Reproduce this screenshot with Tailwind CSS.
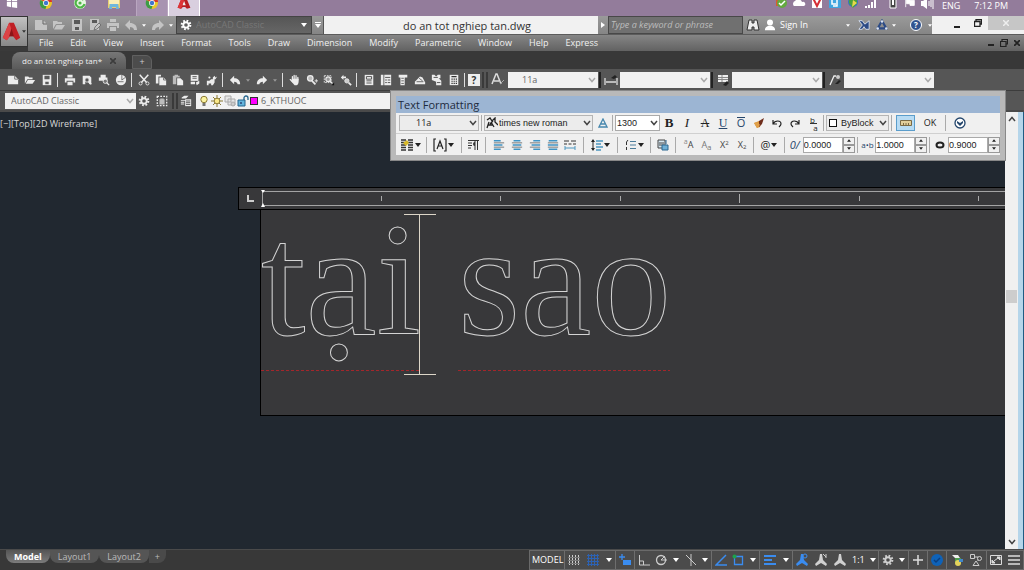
<!DOCTYPE html>
<html lang="en">
<head>
    <meta charset="UTF-8">
    <meta name="viewport" content="width=device-width, initial-scale=1.0">
    <script src="https://cdn.jsdelivr.net/npm/@tailwindcss/browser@4"></script>
    <title>do an tot nghiep tan.dwg</title>
    <style>
        body {
            font-family: 'Open Sans', 'Noto Sans', sans-serif;
        }
        svg {
            flex-shrink: 0;
        }
        .outline-text {
            font-family: 'Liberation Serif', serif;
            color: transparent;
            -webkit-text-stroke: 1px #d4d4d4;
        }
    </style>
</head>
<body class="h-screen flex flex-col overflow-hidden bg-[#212830] text-[9px] leading-3">

    <!-- Icon set -->
    <svg class="hidden">
        <symbol id="caret" viewBox="0 0 6 4"><path d="M0 0h6L3 4z" fill="currentColor"/></symbol>
        <symbol id="chev" viewBox="0 0 8 6"><path d="M1 1l3 3.5L7 1" fill="none" stroke="currentColor" stroke-width="1.5"/></symbol>
        <symbol id="new" viewBox="0 0 14 14"><path d="M1 2h8l4 4v6H1z" fill="currentColor"/><path d="M9 2v4h4" fill="none" stroke="#666"/></symbol>
        <symbol id="open" viewBox="0 0 14 14"><path d="M1 3h4l1 1h4v2H4l-3 5z" fill="currentColor"/><path d="M4.500 7H13l-3 4.500H2z" fill="currentColor"/></symbol>
        <symbol id="save" viewBox="0 0 14 14"><path d="M2 1h10v12H2z" fill="currentColor"/><path d="M4 2h6v4H4zM5 9h4v3H5z" fill="#5a5a5a"/></symbol>
        <symbol id="saveas" viewBox="0 0 14 14"><path d="M2 1h9v11H2z" fill="currentColor"/><path d="M4 2h5v3H4z" fill="#5a5a5a"/><path d="M6 12l1-3 4-4 2 2-4 4z" fill="currentColor" stroke="#5a5a5a" stroke-width=".7"/></symbol>
        <symbol id="print" viewBox="0 0 14 14"><path d="M4 1h6v3H4zM1 5h12v5h-2V8H3v2H1zM4 9h6v4H4z" fill="currentColor"/></symbol>
        <symbol id="preview" viewBox="0 0 14 14"><path d="M2 2h8l2 2v8h-2L8 9V6H5v6H2z" fill="currentColor"/><circle cx="7" cy="7" r="2.500" fill="#555" stroke="currentColor"/><path d="M9 9l3 3" stroke="currentColor" stroke-width="1.500"/></symbol>
        <symbol id="plot" viewBox="0 0 14 14"><path d="M3 1h6v3H3zM1 4h10v4H1z" fill="currentColor"/><circle cx="8.500" cy="8.500" r="2.500" fill="#777" stroke="currentColor"/><path d="M10 10l3 3" stroke="currentColor" stroke-width="1.500"/></symbol>
        <symbol id="globe" viewBox="0 0 14 14"><circle cx="7" cy="7" r="6" fill="currentColor"/><path d="M8 1v6l4-3M3 9h7" stroke="#666" fill="none"/></symbol>
        <symbol id="cut" viewBox="0 0 14 14"><path d="M2 1l8 9M12 1L4 10" stroke="currentColor" stroke-width="1.800"/><circle cx="3" cy="11" r="1.800" fill="none" stroke="currentColor"/><circle cx="11" cy="11" r="1.800" fill="none" stroke="currentColor"/></symbol>
        <symbol id="copy" viewBox="0 0 14 14"><path d="M1 1h6v2H4v8H1z" fill="currentColor"/><path d="M5 4h5l3 3v6H5z" fill="currentColor"/><path d="M10 4v3h3" stroke="#666" fill="none"/></symbol>
        <symbol id="paste" viewBox="0 0 14 14"><path d="M1 2h2V1h4v1h2v2H5v8H1z" fill="#bbb"/><path d="M6 5h4l3 3v5H6z" fill="currentColor"/></symbol>
        <symbol id="match" viewBox="0 0 14 14"><path d="M2 1h9v7H2z" fill="currentColor"/><path d="M4 3h5M4 5h5" stroke="#555"/><path d="M2 9h5v3H2zM8 10l4-2v3l-3 2z" fill="currentColor"/></symbol>
        <symbol id="block" viewBox="0 0 14 14"><path d="M1 8h3l2-2h4v4l-2 3H6v-2H3v2H1zM8 4l2-2 1 2 2-1-2 3H8z" fill="currentColor"/><circle cx="4" cy="4" r="1.200" fill="currentColor"/></symbol>
        <symbol id="undo" viewBox="0 0 14 14"><path d="M6 2v3c4 0 7 2 7 7h-3c0-2-2-3-4-3v3L1 7z" fill="currentColor"/></symbol>
        <symbol id="redo" viewBox="0 0 14 14"><path d="M8 2v3C4 5 1 7 1 12h3c0-2 2-3 4-3v3l5-5z" fill="currentColor"/></symbol>
        <symbol id="hand" viewBox="0 0 14 14"><path d="M4 6V3M6 6V1.500M8.200 6V2M10.300 7V4M4 9L1.500 6.500" stroke="currentColor" stroke-width="1.500" stroke-linecap="round"/><path d="M3.200 5.500h8V9c0 2-1 4-2.500 4H6.500L3 9z" fill="currentColor"/></symbol>
        <symbol id="zoom" viewBox="0 0 14 14"><circle cx="5" cy="5" r="3.200" fill="#bbb" stroke="currentColor" stroke-width="1.500"/><path d="M7 8l4 4" stroke="currentColor" stroke-width="2"/><path d="M10 8h4M12 6v4" stroke="currentColor"/></symbol>
        <symbol id="zoomw" viewBox="0 0 14 14"><path d="M1.500 2h8v8h-8z" fill="none" stroke="currentColor" stroke-dasharray="2 1"/><circle cx="6" cy="6" r="2.700" fill="#999" stroke="currentColor" stroke-width="1.300"/><path d="M8 8l3 3" stroke="currentColor" stroke-width="1.500"/><path d="M13 10v3h-3z" fill="#111"/></symbol>
        <symbol id="zoomp" viewBox="0 0 14 14"><path d="M1 4l3-3v2h3v2H4v2z" fill="currentColor"/><circle cx="8" cy="8" r="2.500" fill="#ccc" stroke="currentColor"/><path d="M10 10l3 3" stroke="currentColor" stroke-width="2"/></symbol>
        <symbol id="props" viewBox="0 0 14 14"><path d="M2 1h10v12H2z" fill="currentColor"/><path d="M4 3h6v3H4zM4 8h6M4 10.500h6" fill="none" stroke="#444"/></symbol>
        <symbol id="design" viewBox="0 0 14 14"><path d="M1 1h3v12H1zM5 1h8v12H5z" fill="currentColor"/><path d="M6 4h6M6 7h2M9 7h3M6 10h2M9 10h3" stroke="#444"/></symbol>
        <symbol id="tool" viewBox="0 0 14 14"><path d="M2 1h10v3H9v9H4V4H2z" fill="currentColor"/><path d="M5 5h3M5 8h3M5 11h3" stroke="#555"/></symbol>
        <symbol id="sheet" viewBox="0 0 14 14"><path d="M1 9l6-6 3 1 3 6v2H1z" fill="currentColor"/><path d="M3 9h8M6 5l4 3" stroke="#555"/></symbol>
        <symbol id="markup" viewBox="0 0 14 14"><path d="M1 1h3l2 2 2-2h3v4H9l3 3v5H6V9L1 7z" fill="currentColor"/><path d="M3 4h5M7 10h4" stroke="#444"/></symbol>
        <symbol id="calc" viewBox="0 0 14 14"><path d="M2 1h10v12H2z" fill="currentColor"/><path d="M4 3h6M4 6h1.500M6.500 6H8M9 6h1.500M4 8.500h1.500M6.500 8.500H8M9 8.500h1.500M4 11h1.500M6.500 11H8M9 11h1.500" stroke="#333" stroke-width="1.300"/></symbol>
        <symbol id="gear" viewBox="0 0 14 14"><circle cx="7" cy="7" r="5" fill="none" stroke="currentColor" stroke-width="2.500" stroke-dasharray="2 1.930"/><circle cx="7" cy="7" r="3.200" fill="none" stroke="currentColor" stroke-width="2.200"/></symbol>
        <symbol id="wssave" viewBox="0 0 14 14"><path d="M1.500 1.500h11v11h-11z" fill="none" stroke="currentColor" stroke-dasharray="2 1.500" stroke-width="1.500"/><path d="M4 5h1V4h4v1h1v6H4z" fill="#bbb"/></symbol>
        <symbol id="layers" viewBox="0 0 14 14"><path d="M2 3l3-2h5L7 4H2zM1 6h6v1H1zM1 8h4v1H1zM1 10h4v1H1z" fill="currentColor"/><path d="M6 5h7v8H6z" fill="currentColor"/><path d="M7 7h5M7 9h5M7 11h5" stroke="#444"/></symbol>
        <symbol id="win" viewBox="0 0 14 14"><path d="M1 1l5-1v6H1zM7 0l6-1v7H7zM1 7h5v6L1 12zM7 7h6v7L7 13z" fill="#fff"/></symbol>
        <symbol id="chrome" viewBox="0 0 14 14"><circle cx="7" cy="7" r="6" fill="#e8c62b"/><path d="M1.500 4A6 6 0 0 1 13 6H7z" fill="#d7362b"/><path d="M1.500 4A6 6 0 0 0 6.500 13L8 8z" fill="#3d9c45"/><circle cx="7" cy="7" r="2.900" fill="#fff"/><circle cx="7" cy="7" r="2.200" fill="#3f76cf"/></symbol>
        <symbol id="coccoc" viewBox="0 0 14 14"><circle cx="7" cy="7" r="6" fill="#e6f7e0"/><path d="M10.500 4A4.500 4.500 0 1 0 11.500 8" fill="none" stroke="#4fb648" stroke-width="2.200"/><circle cx="7" cy="7" r="1.600" fill="#4fb648"/></symbol>
        <symbol id="folder" viewBox="0 0 14 14"><path d="M1 1h5l1 1h6v10H1z" fill="#e6cf72"/><path d="M2 4h10v4H2z" fill="#f7eeb8"/><path d="M3 8h8l1 5H9v-2H5v2H2z" fill="#6db7dd"/></symbol>
        <symbol id="acad" viewBox="0 0 24 24"><path d="M9 1h6l8 19-6 2-3-3h-4l-3 3-6-2z" fill="#b81e22"/><path d="M12 8l3 8H9z" fill="#eee"/><path d="M9 1l3 7-5 14-6-2z" fill="#de3438"/></symbol>
        <symbol id="alogo" viewBox="0 0 24 24"><path d="M9 1h6l8 19-5 3-4-5h-4l-4 5-5-3z" fill="#c01f24"/><path d="M9 1l3 8-2 9-4 5-5-3z" fill="#dc4346"/><path d="M12 8l3 10h-6z" fill="#8d1418"/></symbol>
        <symbol id="al-left" viewBox="0 0 14 14"><path d="M1 4.500h12M1 9.500h12" stroke="#666"/><path d="M1 2h8M1 7h10M1 12h8" stroke="#3f93c4" stroke-width="1.800"/></symbol>
        <symbol id="al-mid" viewBox="0 0 14 14"><path d="M1 4.500h12M1 9.500h12" stroke="#666"/><path d="M3 2h8M2 7h10M3 12h8" stroke="#3f93c4" stroke-width="1.800"/></symbol>
        <symbol id="al-right" viewBox="0 0 14 14"><path d="M1 4.500h12M1 9.500h12" stroke="#666"/><path d="M5 2h8M3 7h10M5 12h8" stroke="#3f93c4" stroke-width="1.800"/></symbol>
        <symbol id="al-just" viewBox="0 0 14 14"><path d="M1 4.500h12M1 9.500h12" stroke="#666"/><path d="M2 2h10M1 7h12M2 12h10" stroke="#3f93c4" stroke-width="1.800"/></symbol>
        <symbol id="man" viewBox="0 0 14 14"><path d="M6 1h2l1 6 4 4-1 2-5-3-5 3-1-2 4-4z" fill="currentColor"/></symbol>
    </svg>

    <!-- Windows taskbar -->
    <div class="h-4 shrink-0 flex items-start bg-[#937c9b] text-white">
        <div class="flex grow">
            <div class="w-6 flex justify-center"><svg class="size-3 -mt-1"><use href="#win"/></svg></div>
            <div class="w-11 flex justify-center"><svg class="size-3.5 -mt-1"><use href="#chrome"/></svg></div>
            <div class="w-6 flex justify-center"><svg class="size-3.5 -mt-1"><use href="#coccoc"/></svg></div>
            <div class="w-11 flex justify-center"><svg class="size-3.5 -mt-1"><use href="#folder"/></svg></div>
            <div class="w-8 h-4 flex justify-center bg-[#a893b1] border-x border-[#b9a6c0]"><svg class="size-3.5 -mt-1"><use href="#chrome"/></svg></div>
            <div class="w-8 h-4 flex justify-center bg-[#d9cfdf] border-x border-white"><svg class="size-3.5 -mt-1"><use href="#acad"/></svg></div>
        </div>
        <div class="flex gap-1 pr-4 items-start">
            <svg class="size-3.5 -mt-1" viewBox="0 0 14 14"><path d="M2 1h8v9H2z" fill="#d95932"/><circle cx="8" cy="7" r="5" fill="#63a93e"/><path d="M5 7l2 2 4-4" stroke="#fff" stroke-width="1.5" fill="none"/></svg>
            <svg class="size-3.5 -mt-1" viewBox="0 0 14 14"><path d="M2 10a3 3 0 0 1 1-5 4 4 0 0 1 7 1 2 2 0 0 1 2 4z" fill="#fff"/></svg>
            <svg class="size-3.5 -mt-1" viewBox="0 0 14 14"><path d="M2 0h10v12H2z" fill="#fff"/><path d="M3 2l4 8 4-8" stroke="#d62d35" stroke-width="2" fill="none"/></svg>
            <svg class="size-3.5 -mt-1" viewBox="0 0 14 14"><path d="M1 0h12v12H1z" fill="#3fa5df"/><path d="M4 2v6h4M9 3v7H5" stroke="#fff" stroke-width="1.5" fill="none"/></svg>
            <svg class="size-3.5 -mt-1" viewBox="0 0 14 14"><circle cx="7" cy="6" r="5" fill="#3277bd"/><path d="M3 2h8v5L7 12 3 7z" fill="#4aa13c"/><path d="M7 4l4 3-5 4z" fill="#e6d84c"/></svg>
            <svg class="size-3.5 -mt-1" viewBox="0 0 14 14"><path d="M2 12v-2M5 12V9M8 12V6M11 12V2" stroke="#fff" stroke-width="2"/></svg>
            <svg class="size-3.5 -mt-1 ml-1" viewBox="0 0 14 14"><path d="M4 1h6v11H4z" fill="#444" stroke="#fff"/><path d="M6 4h2v5H6z" fill="#fff"/></svg>
            <svg class="size-3 -mt-1" viewBox="0 0 14 14"><path d="M2 0v13M3 3h4v2h5v6H7V9H3z" stroke="#fff" fill="#fff"/></svg>
            <svg class="size-3.5 -mt-1" viewBox="0 0 14 14"><path d="M1 5h2l4-3v11L3 10H1z" fill="#fff"/><path d="M9 5v5M11 4v7M13 2v11" stroke="#fff"/></svg>
            <span class="ml-1">ENG</span>
            <span class="ml-2.5">7:12 PM</span>
        </div>
    </div>

    <!-- Title bar and menu -->
    <header class="flex shrink-0 bg-[#3a3a3a]">
        <button class="w-7 h-[31px] shrink-0 flex items-center justify-center gap-px bg-linear-to-b from-[#c2c2c2] to-[#888] border border-[#333] text-[#333]" aria-label="Application menu">
            <svg class="size-[19px]"><use href="#alogo"/></svg>
            <svg class="w-1 h-[3px]"><use href="#caret"/></svg>
        </button>
        <div class="grow">
            <div class="h-[18px] flex items-stretch bg-linear-to-b from-[#9a9a9a] to-[#858585]">
                <div class="w-[148px] shrink-0 pl-1.5 flex items-center gap-1 text-[#c4c4c4]">
                    <svg class="size-3.5"><use href="#new"/></svg>
                    <svg class="size-3.5"><use href="#open"/></svg>
                    <svg class="size-3.5"><use href="#save"/></svg>
                    <svg class="size-3.5"><use href="#saveas"/></svg>
                    <svg class="size-3.5"><use href="#print"/></svg>
                    <svg class="size-3.5"><use href="#undo"/></svg>
                    <svg class="w-1 h-[3px] text-white"><use href="#caret"/></svg>
                    <svg class="size-3.5 ml-px"><use href="#redo"/></svg>
                    <svg class="w-1 h-[3px] text-white"><use href="#caret"/></svg>
                </div>
                <div class="relative w-[136px] shrink-0 flex items-center bg-linear-to-b from-[#565656] to-[#666] border border-[#444] text-white">
                    <svg class="size-3 ml-[3px]"><use href="#gear"/></svg>
                    <select aria-label="Workspace" class="appearance-none grow pl-1 text-[#777]"><option>AutoCAD Classic</option></select>
                    <svg class="w-1.5 h-1 absolute right-1"><use href="#caret"/></svg>
                </div>
                <button class="w-3 shrink-0 flex flex-col items-center justify-center gap-px text-white border-r border-[#555]" aria-label="Customize"><span class="w-1.5 h-px bg-white"></span><svg class="w-1.5 h-1"><use href="#caret"/></svg></button>
                <div class="grow bg-[#f1f1f1] text-[#333] text-[11px] leading-4 pt-0.5 text-center pl-3">do an tot nghiep tan.dwg</div>
                <button class="w-2.5 shrink-0 flex items-center justify-center text-white" aria-label="Collapse"><svg class="w-1 h-1.5" viewBox="0 0 4 6"><path d="M0 0v6l4-3z" fill="currentColor"/></svg></button>
                <input type="text" aria-label="Search" placeholder="Type a keyword or phrase" class="w-[135px] shrink-0 bg-[#707070] border border-[#484848] pl-0.5 italic placeholder:text-[#bdbdbd]">
                <div class="w-[189px] shrink-0 flex items-center text-white pl-[3px]">
                    <svg class="size-3.5" viewBox="0 0 14 14"><path d="M3 2h3v3h2V2h3l2 10H8V9H6v3H1z" fill="#eee" stroke="#333"/></svg>
                    <svg class="size-3 ml-1" viewBox="0 0 14 14"><circle cx="7" cy="4" r="3.500" fill="#fff"/><path d="M1 13c0-3 2-4 4-5h4c2 1 4 2 4 5z" fill="#fff"/></svg>
                    <a href="#" class="ml-1 w-[66px]">Sign In</a>
                    <svg class="w-1 h-[3px]"><use href="#caret"/></svg>
                    <svg class="size-3 ml-2" viewBox="0 0 14 14"><path d="M1 2h4l3 4 5-4v10H9L7 9l-2 3H1l4-5z" fill="#2c4b86" stroke="#dce4f2"/></svg>
                    <svg class="size-3 ml-1.5" viewBox="0 0 14 14"><path d="M7 2l5 9H2z" fill="none" stroke="#2c4b86" stroke-width="2.500"/><circle cx="7" cy="3" r="1.500" fill="#dce4f2"/><circle cx="2" cy="11" r="1.500" fill="#dce4f2"/><circle cx="12" cy="11" r="1.500" fill="#dce4f2"/></svg>
                    <svg class="w-1 h-[3px] ml-1"><use href="#caret"/></svg>
                    <span class="size-3 ml-3.5 rounded-full bg-[#31548f] border border-white font-bold text-[8px] leading-[10px] text-center">?</span>
                    <svg class="w-1 h-[3px] ml-1.5"><use href="#caret"/></svg>
                </div>
                <div class="w-[92px] shrink-0 flex bg-[#f1f1f1] text-[#222]">
                    <button class="w-9 pl-[22px]" aria-label="Minimize"><span class="block w-1.5 h-0.5 mt-1 bg-[#222]"></span></button>
                    <button class="w-5 h-3.5 flex items-center justify-center" aria-label="Restore"><svg class="size-2" viewBox="0 0 8 8"><path d="M2 2V.5h5.500V5H6M.5 2.500H6v5H.5z" fill="none" stroke="currentColor" stroke-width="1.300"/></svg></button>
                    <button class="grow h-3.5 bg-[#c6c6c6] flex items-center justify-center text-[#eee]" aria-label="Close"><svg class="size-1.5" viewBox="0 0 6 6"><path d="M0 0l6 6M6 0L0 6" stroke="currentColor" stroke-width="1.500"/></svg></button>
                </div>
            </div>
            <nav class="h-[17px] flex items-center bg-linear-to-b from-[#868686] to-[#626262] text-[#f0f0f0] border-t border-[#5c5c5c] pl-[11px] pr-1">
                <ul class="flex gap-[17px] grow">
                    <li>File</li><li>Edit</li><li>View</li><li>Insert</li><li>Format</li><li>Tools</li><li>Draw</li><li>Dimension</li><li>Modify</li><li>Parametric</li><li>Window</li><li>Help</li><li>Express</li>
                </ul>
                <div class="flex items-center gap-1.5 text-[#222]">
                    <span class="w-1.5 h-0.5 mt-1 bg-[#222]"></span>
                    <svg class="size-2" viewBox="0 0 8 8"><path d="M2 2V.5h5.500V5H6M.5 2.500H6v5H.5z" fill="none" stroke="currentColor" stroke-width="1.200"/></svg>
                    <svg class="size-1.5" viewBox="0 0 6 6"><path d="M0 0l6 6M6 0L0 6" stroke="currentColor" stroke-width="1.700"/></svg>
                </div>
            </nav>
        </div>
    </header>

    <!-- File tabs -->
    <div class="h-[19px] shrink-0 flex items-end bg-[#383838] pl-3 border-b border-[#555]">
        <div class="h-[17px] flex items-center bg-linear-to-b from-[#777] to-[#5a5a5a] text-[#eee] rounded-t-lg px-2.5 gap-2 text-[8px]">do an tot nghiep tan*
            <svg class="size-1.5 text-[#3c3c3c]" viewBox="0 0 6 6"><path d="M0 0l6 6M6 0L0 6" stroke="currentColor" stroke-width="1.600"/></svg>
        </div>
        <button class="w-5 h-3.5 ml-1.5 bg-[#4c4c4c] border border-[#606060] rounded-tr-md text-[#ccc] text-[9px] leading-3">+</button>
    </div>

    <!-- Standard toolbar -->
    <div class="h-5 shrink-0 flex items-center bg-[#565656] text-[#ececec] pl-1">
        <div class="flex w-[51px] justify-around"><svg class="size-3"><use href="#new"/></svg><svg class="size-3"><use href="#open"/></svg><svg class="size-3"><use href="#save"/></svg></div>
        <i class="w-px h-3.5 ml-[2px] mr-[3px] bg-[#ddd]"></i>
        <div class="flex w-[68px] justify-around"><svg class="size-3"><use href="#print"/></svg><svg class="size-3"><use href="#preview"/></svg><svg class="size-3"><use href="#plot"/></svg><svg class="size-3"><use href="#globe"/></svg></div>
        <i class="w-px h-3.5 ml-[2px] mr-[3px] bg-[#ddd]"></i>
        <div class="flex w-[85px] justify-around"><svg class="size-3"><use href="#cut"/></svg><svg class="size-3"><use href="#copy"/></svg><svg class="size-3"><use href="#paste"/></svg><svg class="size-3"><use href="#match"/></svg><svg class="size-3"><use href="#block"/></svg></div>
        <i class="w-px h-3.5 ml-[2px] mr-[3px] bg-[#ddd]"></i>
        <div class="flex w-[54px] justify-around items-center"><svg class="size-3"><use href="#undo"/></svg><svg class="w-1 h-[3px] text-[#999]"><use href="#caret"/></svg><svg class="size-3"><use href="#redo"/></svg><svg class="w-1 h-[3px] text-[#999]"><use href="#caret"/></svg></div>
        <i class="w-px h-3.5 ml-[2px] mr-[3px] bg-[#ddd]"></i>
        <div class="flex w-[68px] justify-around"><svg class="size-3"><use href="#hand"/></svg><svg class="size-3"><use href="#zoom"/></svg><svg class="size-3"><use href="#zoomw"/></svg><svg class="size-3"><use href="#zoomp"/></svg></div>
        <i class="w-px h-3.5 ml-[2px] mr-[3px] bg-[#ddd]"></i>
        <div class="flex w-[102px] justify-around"><svg class="size-3"><use href="#props"/></svg><svg class="size-3"><use href="#design"/></svg><svg class="size-3"><use href="#tool"/></svg><svg class="size-3"><use href="#sheet"/></svg><svg class="size-3"><use href="#markup"/></svg><svg class="size-3"><use href="#calc"/></svg></div>
        <i class="w-px h-3.5 ml-[2px] mr-[3px] bg-[#ddd]"></i>
        <span class="w-3 h-3 bg-[#eee] text-[#333] text-[10px] font-bold text-center">?</span>
        <i class="w-1.5 h-4 ml-0.5 border-x-2 border-[#3a3a3a]"></i>
        <div class="w-5 flex justify-center"><svg class="size-3.5" viewBox="0 0 14 14"><path d="M1 11L5 1h1l4 10M3 8h5" stroke="#ddd" stroke-width="1.500" fill="none"/><path d="M9 11l4-4" stroke="#aaa"/></svg></div>

        <div class="relative w-[90px] flex items-center">
            <select aria-label="Text style" class="appearance-none w-full h-4 pl-3.5 bg-[#f2f2f2] text-[#666]"><option>11a</option></select>
            <svg class="w-2 h-1.5 absolute right-0.5 text-[#aaa]"><use href="#chev"/></svg>
        </div>
        <i class="w-0.5 h-4 ml-px bg-[#222]"></i>
        <div class="w-[19px] flex justify-center"><svg class="size-3.5" viewBox="0 0 14 14"><path d="M1 5v7M13 5v7M2 9h10" stroke="#ddd" stroke-width="1.300"/><path d="M7 5l4-3 2 2-3 2z" fill="#222"/></svg></div>
        <div class="relative w-[90px] flex items-center">
            <select aria-label="Dimension style" class="appearance-none w-full h-4 bg-[#f2f2f2]"><option></option></select>
            <svg class="w-2 h-1.5 absolute right-0.5 text-[#aaa]"><use href="#chev"/></svg>
        </div>
        <i class="w-0.5 h-4 ml-px bg-[#222]"></i>
        <div class="w-[19px] flex justify-center"><svg class="size-3.5" viewBox="0 0 14 14"><path d="M2 2h10v7H2z" fill="#eee"/><path d="M2 4.500h10M2 6.500h10M6 2v7" stroke="#888"/><path d="M7 12l4-4 2 2-3 3z" fill="#222"/></svg></div>
        <div class="relative w-[90px] flex items-center">
            <select aria-label="Table style" class="appearance-none w-full h-4 bg-[#f2f2f2]"><option></option></select>
            <svg class="w-2 h-1.5 absolute right-0.5 text-[#aaa]"><use href="#chev"/></svg>
        </div>
        <i class="w-0.5 h-4 ml-px bg-[#222]"></i>
        <div class="w-[19px] flex justify-center"><svg class="size-3.5" viewBox="0 0 14 14"><path d="M2 12L6 3h2" stroke="#eee" stroke-width="1.300" fill="none"/><circle cx="10" cy="4" r="2" fill="#ccc"/><path d="M7 11l4-4 2 1-3 3z" fill="#222"/></svg></div>
        <div class="relative w-[90px] flex items-center">
            <select aria-label="Multileader style" class="appearance-none w-full h-4 bg-[#f2f2f2]"><option></option></select>
            <svg class="w-2 h-1.5 absolute right-0.5 text-[#aaa]"><use href="#chev"/></svg>
        </div>
    </div>

    <!-- Workspace and layer toolbar -->
    <div class="h-[22px] shrink-0 flex items-center bg-[#565656] text-[#ececec] border-t border-b-2 border-t-[#3c3c3c] border-b-[#4a4a4a] pl-[5px]">
        <div class="relative w-[131px] flex items-center">
            <select aria-label="Workspace list" class="appearance-none w-full h-4 pl-1.5 bg-[#f2f2f2] text-[#666]"><option>AutoCAD Classic</option></select>
            <svg class="w-2 h-1.5 absolute right-0.5 text-[#aaa]"><use href="#chev"/></svg>
        </div>
        <svg class="size-3 ml-0.5"><use href="#gear"/></svg>
        <svg class="size-3 ml-1.5"><use href="#wssave"/></svg>
        <i class="w-1.5 h-4 ml-1 border-x-2 border-[#3a3a3a]"></i>
        <svg class="size-3 ml-0.5"><use href="#layers"/></svg>
        <div class="ml-1 w-60 h-4 bg-[#f2f2f2] flex items-center gap-px pl-0.5 text-[#666]">
            <svg class="size-3" viewBox="0 0 12 12"><circle cx="6" cy="4.500" r="3.200" fill="#fbf3a0" stroke="#8b7a35"/><path d="M4.500 8h3v3h-3z" fill="#777"/></svg>
            <svg class="size-3" viewBox="0 0 12 12"><path d="M6 0v12M0 6h12M2 2l8 8M10 2l-8 8" stroke="#8b7a35"/><circle cx="6" cy="6" r="2.800" fill="#fbe98a" stroke="#8b7a35"/></svg>
            <svg class="size-3" viewBox="0 0 12 12"><path d="M1 1h6v6H1zM4 4h7v6H4z" fill="#e6e6e6" stroke="#aaa"/><circle cx="9" cy="9" r="2" fill="#ccc" stroke="#aaa"/></svg>
            <svg class="size-3" viewBox="0 0 12 12"><path d="M1 5h7v6H1z" fill="#63b4dc" stroke="#24648c"/><path d="M7 5V3a2 2 0 0 1 4 0v2" fill="none" stroke="#24648c" stroke-width="1.300"/><path d="M4 7v2" stroke="#114"/></svg>
            <span class="size-2 bg-[#f0f] border border-[#333]"></span>
            <span class="ml-0.5">6_KTHUOC</span>
        </div>
    </div>

    <!-- Drawing area -->
    <main class="grow flex min-h-0">
        <div class="relative grow overflow-hidden">
            <p class="text-[#d8d8d8] pt-[6px]">[−][Top][2D Wireframe]</p>

            <!-- In-place text editor -->
            <div class="absolute left-[238px] right-0 top-[75px] h-[23px] bg-[#38383a] border border-r-0 border-black flex">
                <button class="w-[22px] shrink-0 flex items-center justify-center" aria-label="Tab stop"><svg class="size-2" viewBox="0 0 8 8"><path d="M2 0v6h6" stroke="#ccc" stroke-width="2" fill="none"/></svg></button>
                <svg class="grow h-[21px]">
                    <path d="M1 3.500H2000M1 17.500H2000M1.500 2v17" stroke="#a4a4a4" fill="none"/>
                    <path d="M0 2h4L2 5zM0 19h4L2 15z" fill="#fff"/>
                    <path d="M120.500 8v5M239.500 8v5M359.500 8v5M478.500 6v9M598.500 8v5M717.500 8v5" stroke="#aaa"/>
                </svg>
            </div>
            <div class="absolute left-[260px] right-0 top-[98px] h-[206px] bg-[#38383a] border border-r-0 border-t-0 border-black">
                <div class="outline-text absolute left-0 top-[12px] text-[160px] leading-[116px] whitespace-nowrap">tại</div>
                <div class="outline-text absolute left-[197px] top-[12px] text-[160px] leading-[116px] whitespace-nowrap">sao</div>
                <svg class="absolute inset-0 w-full h-full">
                    <path d="M0 160.500h158M197 160.500h212" stroke="#a3262b" stroke-dasharray="3 2"/>
                    <path d="M143 4.500h32M143 164.500h32M158.500 4v160" stroke="#ddd6c8"/>
                </svg>
            </div>
        </div>
        <div class="w-[13px] shrink-0 bg-[#f0f0f0] flex flex-col items-center justify-between py-1 relative text-[#444]">
            <svg class="w-2 h-1.5 rotate-180"><use href="#chev"/></svg>
            <span class="absolute top-[178px] w-[11px] h-[13px] bg-[#cdcdcd]"></span>
            <svg class="w-2 h-1.5"><use href="#chev"/></svg>
        </div>
        <div class="w-[6px] shrink-0 bg-[#b5d5ea] border-r border-[#1f5b83]"></div>
    </main>

    <!-- Layout tabs and status bar -->
    <footer class="h-[21px] shrink-0 flex items-start justify-between bg-[#383838] border-t border-[#4a4a4a] text-[#bbb]">
        <div class="flex pl-1.5">
            <button class="h-[13px] px-2 bg-linear-to-b from-[#555] to-[#7c7c7c] text-white font-bold rounded-b-lg">Model</button>
            <button class="h-[13px] px-2 bg-[#555] rounded-b-lg">Layout1</button>
            <button class="h-[13px] px-2 bg-[#555] rounded-b-lg">Layout2</button>
            <button class="h-[13px] px-1.5 bg-[#4a4a4a] rounded-br-lg">+</button>
        </div>
        <div class="h-5 flex items-center bg-[#4b4b4b] text-[#d0d0d0] border border-[#6a6a6a] divide-x divide-[#6e6e6e]">
            <button class="h-full px-0.5 w-[35px] text-white">MODEL</button>
            <div class="h-full w-[51px] flex items-center justify-around">
                <svg class="size-3" viewBox="0 0 12 12"><path d="M1.500 1v10M4.500 1v10M7.500 1v10M10.500 1v10" stroke="#ccc"/><path d="M0 3.500h12M0 6.500h12M0 9.500h12" stroke="#777"/></svg>
                <svg class="size-3" viewBox="0 0 12 12"><path d="M1.500 0v12M4.500 0v12M7.500 0v12M10.500 0v12M0 1.500h12M0 4.500h12M0 7.500h12M0 10.500h12" stroke="#2c62b4"/></svg>
                <svg class="w-1.5 h-1 text-white"><use href="#caret"/></svg>
            </div>
            <div class="h-full w-[19px] flex items-center justify-center"><svg class="size-3" viewBox="0 0 12 12"><path d="M3 0v6M0 3h6" stroke="#3a8cf0" stroke-width="1.300"/><path d="M4 6h8v5H4z" fill="#3a8cf0"/></svg></div>
            <div class="h-full w-[77px] flex items-center justify-around">
                <svg class="size-3" viewBox="0 0 12 12"><path d="M1.500 1v10H12M1.500 7h4v4" stroke="#ccc" fill="none"/></svg>
                <svg class="size-3" viewBox="0 0 12 12"><circle cx="6" cy="6" r="4.500" stroke="#ccc" fill="none" stroke-width="1.300"/><path d="M6 6h6M6 6l4-4" stroke="#ccc"/></svg>
                <svg class="w-1.5 h-1 text-white"><use href="#caret"/></svg>
                <svg class="size-3" viewBox="0 0 12 12"><path d="M1 1l10 10M6 0v12" stroke="#ccc" fill="none"/></svg>
                <svg class="w-1.5 h-1 text-white"><use href="#caret"/></svg>
            </div>
            <div class="h-full w-12 flex items-center justify-around">
                <svg class="size-3" viewBox="0 0 12 12"><path d="M11 1L1 11h11" stroke="#3a8cf0" fill="none" stroke-width="1.500"/></svg>
                <svg class="size-3" viewBox="0 0 12 12"><path d="M2.500 2.500h8v8h-8z" stroke="#3a8cf0" fill="none" stroke-width="1.300"/><circle cx="2.500" cy="2.500" r="2" fill="#1da34b"/></svg>
                <svg class="w-1.5 h-1 text-white"><use href="#caret"/></svg>
            </div>
            <div class="h-full w-[33px] flex items-center justify-around">
                <svg class="size-3" viewBox="0 0 12 12"><path d="M0 1h12v2H0zM0 5h8v2H0zM0 9h12v2H0z" fill="#3a8cf0"/></svg>
                <svg class="w-1.5 h-1 text-white"><use href="#caret"/></svg>
            </div>
            <div class="h-full w-[86px] flex items-center justify-around">
                <svg class="size-3.5 text-[#3a8cf0]" viewBox="0 0 14 14"><use href="#man"/><circle cx="10" cy="3" r="2" fill="none" stroke="currentColor"/></svg>
                <svg class="size-3.5" viewBox="0 0 14 14"><use href="#man"/><path d="M9 1l3 3M12 1v4" stroke="currentColor"/></svg>
                <svg class="size-3.5"><use href="#man"/></svg>
                <span class="text-white">1:1</span>
                <svg class="w-1.5 h-1 text-white"><use href="#caret"/></svg>
            </div>
            <div class="h-full w-[30px] flex items-center justify-around">
                <svg class="size-3"><use href="#gear"/></svg>
                <svg class="w-1.5 h-1 text-white"><use href="#caret"/></svg>
            </div>
            <div class="h-full w-[19px] flex items-center justify-center"><svg class="size-3" viewBox="0 0 12 12"><path d="M6 1v10M1 6h10" stroke="#ddd" stroke-width="1.500"/></svg></div>
            <div class="h-full w-[19px] flex items-center justify-center"><svg class="size-3.5" viewBox="0 0 14 14"><circle cx="7" cy="7" r="6" fill="#0e62b8"/><path d="M4 7l2 2 4-4" stroke="#0a3f80" stroke-width="1.500" fill="none"/></svg></div>
            <div class="h-full w-10 flex items-center justify-around">
                <svg class="size-3" viewBox="0 0 12 12"><path d="M1 1h6l2 3H4z" fill="#eee"/><path d="M4 4h6v4H4z" fill="#4d9b4b"/><circle cx="7" cy="9" r="3" fill="#e3d35c"/><path d="M8 5h4v3H8z" fill="#4186c9"/></svg>
                <svg class="size-3" viewBox="0 0 12 12"><path d="M.5 .5h4v4h-4zM6 7l3 4.500H3zM4 3h4v4" stroke="#ccc" fill="none"/><circle cx="9.500" cy="4.500" r="2" stroke="#ccc" fill="#4b4b4b"/></svg>
            </div>
            <div class="h-full w-9 flex items-center justify-around">
                <svg class="size-3" viewBox="0 0 12 12"><path d="M.5 1.500h11v9H.5z" stroke="#ddd" fill="none"/><path d="M7 3h3v3zM2 6v3h3zM4 7l4-3" stroke="#ddd" fill="#ddd"/></svg>
                <svg class="size-3" viewBox="0 0 12 12"><path d="M0 2h12M0 6h12M0 10h12" stroke="#ddd" stroke-width="1.500"/></svg>
            </div>
        </div>
    </footer>

    <!-- Text Formatting palette -->
    <section class="absolute left-[390px] top-[90px] w-[616px] border border-[#888] bg-[#b9b9b9] p-[5px] text-[#222]">
        <h2 class="h-[17px] px-0.5 bg-[#9cb5d3] text-[11px] leading-[17px] text-[#1c2b3d]">Text Formatting</h2>
        <div class="h-[21px] flex items-center bg-[#f0f0f0] border-b border-[#d0d0d0]">
            <div class="relative w-20 ml-[3px] flex items-center">
                <select aria-label="Style" class="appearance-none w-full h-4 pl-4 bg-[#ececec] border border-[#b5b5b5]"><option>11a</option></select>
                <svg class="w-2 h-1.5 absolute right-0.5 text-[#444]"><use href="#chev"/></svg>
            </div>
            <i class="w-px h-4 mx-[2px] bg-[#aaa]"></i>
            <div class="relative w-[109px] flex items-center">
                <svg class="size-3 absolute left-0.5" viewBox="0 0 12 12"><path d="M1 11L3 5M5 5l3 5M2 8h5M1 3l3-2 2 3 3-3v4l3 3M7 4l-3 3" stroke="#222" stroke-width="1.300" fill="none"/></svg>
                <select aria-label="Font" class="appearance-none w-full h-4 pl-3.5 bg-[#ececec] border border-[#b5b5b5] font-['Liberation_Sans',sans-serif]"><option>times new roman</option></select>
                <svg class="w-2 h-1.5 absolute right-0.5 text-[#444]"><use href="#chev"/></svg>
            </div>
            <button class="w-[19px] flex justify-center" aria-label="Annotative"><svg class="size-2.5" viewBox="0 0 10 10"><path d="M5 1l4 8H1zM3 6h4" stroke="#4787ad" fill="none" stroke-width="1.300"/></svg></button>
            <i class="w-px h-4 mr-[2px] bg-[#aaa]"></i>
            <div class="relative w-[45px] flex items-center">
                <input type="text" aria-label="Text height" value="1300" class="w-full h-4 pl-px bg-white border border-[#aaa] font-['Liberation_Sans',sans-serif]">
                <svg class="w-2 h-1.5 absolute right-0.5 text-[#444]"><use href="#chev"/></svg>
            </div>
            <button class="w-[18px] font-['Liberation_Serif',serif] font-bold text-[13px]">B</button>
            <button class="w-[18px] font-['Liberation_Serif',serif] italic text-[13px]">I</button>
            <button class="w-[18px] font-['Liberation_Serif',serif] line-through text-[12px]">A</button>
            <button class="w-[18px] font-['Liberation_Serif',serif] underline text-[12px] text-[#26466b]">U</button>
            <button class="w-[18px] text-[11px] text-[#26466b]"><span class="inline-block border-t border-[#26466b] leading-[9px]">O</span></button>
            <button class="w-[18px] flex justify-center" aria-label="Match"><svg class="size-3" viewBox="0 0 12 12"><path d="M1 6l5-2 2 2-1 4-3 1z" fill="#d9933b"/><path d="M6 4l5-3-2 6-3 3z" fill="#6e2d1b"/><path d="M1 6l4-1 2 3-3 3z" fill="#e0a04a"/></svg></button>
            <button class="w-[18px] flex justify-center" aria-label="Undo"><svg class="size-2.5" viewBox="0 0 10 10"><path d="M1 2v4h4M1 6c2-4 8-4 8 0 0 1-1 2-2 3" stroke="#222" fill="none" stroke-width="1.200"/></svg></button>
            <button class="w-[18px] flex justify-center" aria-label="Redo"><svg class="size-2.5" viewBox="0 0 10 10"><path d="M9 2v4H5M9 6C7 2 1 2 1 6c0 1 1 2 2 3" stroke="#222" fill="none" stroke-width="1.200"/></svg></button>
            <button class="w-[19px] flex flex-col items-center text-[8px] leading-[7px]" aria-label="Stack"><span class="border-b border-[#333] pr-0.5">b</span><span class="pl-1">a</span></button>
            <i class="w-px h-4 mr-[2px] bg-[#aaa]"></i>
            <div class="relative w-[63px] flex items-center">
                <span class="absolute left-[3px] size-2 border border-[#111] bg-white"></span>
                <select aria-label="Color" class="appearance-none w-full h-4 pl-3.5 bg-[#ececec] border border-[#b5b5b5] font-['Liberation_Sans',sans-serif]"><option>ByBlock</option></select>
                <svg class="w-2 h-1.5 absolute right-0.5 text-[#444]"><use href="#chev"/></svg>
            </div>
            <i class="w-px h-4 mx-[2px] bg-[#aaa]"></i>
            <button class="w-[19px] h-4 ml-[2px] flex items-center justify-center bg-[#b8dcf4] border border-[#5b9dcb]" aria-label="Ruler"><svg class="w-3 h-1.5" viewBox="0 0 12 6"><path d="M.5 .5h11v5H.5z" fill="#e2cf9c" stroke="#7a6a45"/><path d="M3.500 3v3M6 3v3M8.500 3v3" stroke="#7a6a45"/></svg></button>
            <button class="w-[30px]">OK</button>
            <i class="w-px h-4 bg-[#aaa]"></i>
            <button class="w-[27px] flex justify-center" aria-label="Options"><svg class="size-3" viewBox="0 0 12 12"><circle cx="6" cy="6" r="5" fill="#fff" stroke="#24466c" stroke-width="1.300"/><path d="M3 4l3 2 3-2v2L6 9 3 6z" fill="#24466c"/></svg></button>
        </div>
        <div class="h-[21px] flex items-center bg-[#f0f0f0] pl-1">
            <button class="w-[22px] flex items-center gap-px" aria-label="Columns"><svg class="size-3.5" viewBox="0 0 14 14"><path d="M1 2h5M1 4.500h5M1 7h5M1 9.500h5M1 12h5M8 2h5M8 4.500h5M8 7h5M8 9.500h5M8 12h5" stroke="#333" stroke-width="1.300"/><path d="M3 5l4-3 2 3-3 3z" fill="#d8b929"/></svg><svg class="w-1.5 h-1"><use href="#caret"/></svg></button>
            <i class="w-px h-4 mx-1 bg-[#aaa]"></i>
            <button class="w-[26px] flex items-center justify-center gap-px" aria-label="Justification"><svg class="size-3.5" viewBox="0 0 14 14"><path d="M3 1H1v12h2M11 1h2v12h-2M4 11l3-8 3 8M5 8h4" stroke="#222" stroke-width="1.200" fill="none"/></svg><svg class="w-1.5 h-1"><use href="#caret"/></svg></button>
            <i class="w-px h-4 mx-1 bg-[#aaa]"></i>
            <button class="w-4 flex justify-center" aria-label="Paragraph"><svg class="size-3" viewBox="0 0 12 12"><path d="M1 1.500h11M1 4h4M1 6.500h4M1 9h3M8 2v9M10.500 2v9" stroke="#333"/><path d="M8 3a2 2 0 0 0 0 4z" fill="#333"/></svg></button>
            <i class="w-px h-4 mx-1 bg-[#aaa]"></i>
            <div class="w-[90px] flex justify-around">
                <svg class="size-3"><use href="#al-left"/></svg>
                <svg class="size-3"><use href="#al-mid"/></svg>
                <svg class="size-3"><use href="#al-right"/></svg>
                <svg class="size-3"><use href="#al-just"/></svg>
                <svg class="size-3" viewBox="0 0 12 12"><path d="M0 2h5M7 2h5M0 5h3M4.500 5h3M9 5h3" stroke="#333"/><path d="M1 9h10M1 7v4M11 7v4" stroke="#4d96bf"/></svg>
            </div>
            <i class="w-px h-4 mx-1 bg-[#aaa]"></i>
            <button class="w-[25px] flex items-center justify-center gap-px" aria-label="Line spacing"><svg class="size-3" viewBox="0 0 12 12"><path d="M2 1v10" stroke="#222"/><path d="M0 3l2-3 2 3zM0 9l2 3 2-3z" fill="#222"/><path d="M5 2h7M5 5h5M5 8h7M5 11h5" stroke="#4d96bf" stroke-width="1.400"/></svg><svg class="w-1.5 h-1"><use href="#caret"/></svg></button>
            <i class="w-px h-4 mx-1 bg-[#aaa]"></i>
            <button class="w-6 flex items-center justify-center gap-px" aria-label="Numbering"><svg class="size-3" viewBox="0 0 12 12"><path d="M3 1L1.500 3v3M1.500 8v3" stroke="#333" fill="none"/><path d="M5 2.500h6M5 6h6M5 9.500h6" stroke="#4d7d9b" stroke-width="1.200"/></svg><svg class="w-1.5 h-1"><use href="#caret"/></svg></button>
            <i class="w-px h-4 mx-1 bg-[#aaa]"></i>
            <button class="w-4 flex justify-center" aria-label="Insert field"><svg class="size-3" viewBox="0 0 12 12"><path d="M1 1h7v8H1z" fill="#d4e6f0" stroke="#444"/><path d="M2 4h5M2 6h5" stroke="#444"/><path d="M5 6h6v5H5zM9 1v4" fill="#6fb0d6" stroke="#2a6790"/></svg></button>
            <i class="w-px h-4 mx-1 bg-[#aaa]"></i>
            <button class="w-[18px] text-[#444]" aria-label="Uppercase"><sup class="text-[7px] text-[#888]">a</sup>A</button>
            <button class="w-[18px] text-[#777]" aria-label="Lowercase">A<sub class="text-[8px]">a</sub></button>
            <button class="w-[18px] text-[#444]" aria-label="Superscript">X<sup class="text-[6px]">2</sup></button>
            <button class="w-[18px] text-[#444]" aria-label="Subscript">X<sub class="text-[6px]">2</sub></button>
            <i class="w-px h-4 mx-0.5 bg-[#aaa]"></i>
            <button class="w-[26px] flex items-center justify-center gap-px text-[11px]" aria-label="Symbol">@<svg class="w-1.5 h-1"><use href="#caret"/></svg></button>
            <i class="w-px h-4 mx-0.5 bg-[#aaa]"></i>
            <label for="oblique" class="w-4 italic text-[11px] text-center text-[#26466b]">0/</label>
            <input id="oblique" type="text" value="0.0000" class="w-10 h-4 bg-white border border-[#aaa] font-['Liberation_Sans',sans-serif]">
            <div class="w-3 h-4 flex flex-col">
                <button class="grow border border-[#999] flex items-center justify-center" aria-label="Increase angle"><svg class="w-1 h-[3px] rotate-180"><use href="#caret"/></svg></button>
                <button class="grow border border-[#999] flex items-center justify-center" aria-label="Decrease angle"><svg class="w-1 h-[3px]"><use href="#caret"/></svg></button>
            </div>
            <i class="w-px h-4 mx-0.5 bg-[#aaa]"></i>
            <label for="tracking" class="w-4 text-[8px] text-center text-[#26466b]">a•b</label>
            <input id="tracking" type="text" value="1.0000" class="w-10 h-4 bg-white border border-[#aaa] font-['Liberation_Sans',sans-serif]">
            <div class="w-3 h-4 flex flex-col">
                <button class="grow border border-[#999] flex items-center justify-center" aria-label="Increase tracking"><svg class="w-1 h-[3px] rotate-180"><use href="#caret"/></svg></button>
                <button class="grow border border-[#999] flex items-center justify-center" aria-label="Decrease tracking"><svg class="w-1 h-[3px]"><use href="#caret"/></svg></button>
            </div>
            <i class="w-px h-4 mx-0.5 bg-[#aaa]"></i>
            <label for="widthf" class="w-4 flex justify-center" aria-label="Width factor"><svg class="w-2.5 h-2" viewBox="0 0 10 8"><ellipse cx="5" cy="4" rx="3.500" ry="2.500" fill="none" stroke="#222" stroke-width="2"/></svg></label>
            <input id="widthf" type="text" value="0.9000" class="w-10 h-4 bg-white border border-[#aaa] font-['Liberation_Sans',sans-serif]">
            <div class="w-3 h-4 flex flex-col">
                <button class="grow border border-[#999] flex items-center justify-center" aria-label="Increase width"><svg class="w-1 h-[3px] rotate-180"><use href="#caret"/></svg></button>
                <button class="grow border border-[#999] flex items-center justify-center" aria-label="Decrease width"><svg class="w-1 h-[3px]"><use href="#caret"/></svg></button>
            </div>
        </div>
    </section>
</body>
</html>
